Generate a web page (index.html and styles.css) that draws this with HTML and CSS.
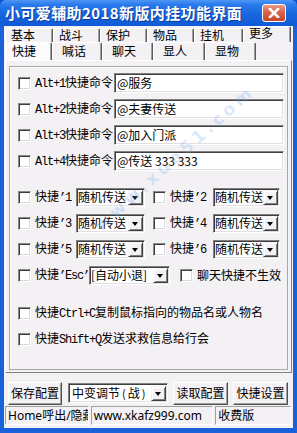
FILE: index.html
```html
<!DOCTYPE html>
<html lang="zh-CN">
<head>
    <meta charset="UTF-8">
    <title>小可爱辅助2018新版内挂功能界面</title>
    <link rel="stylesheet" href="styles.css">
</head>
<body>
<div class="window">
    <div class="titlebar">
        <span class="title">小可爱辅助2018新版内挂功能界面</span>
        <span class="close">
            <svg width="12" height="10" viewBox="0 0 12 10"><path d="M2 1 L10 9 M10 1 L2 9" stroke="#fff" stroke-width="2.6" stroke-linecap="square"/></svg>
        </span>
    </div>

    <div class="frame">
        <!-- two rows of tabs -->
        <div class="tabrow row1">
            <div class="tab w48">基本</div>
            <div class="tab w47">战斗</div>
            <div class="tab w47">保护</div>
            <div class="tab w47">物品</div>
            <div class="tab w49">挂机</div>
            <div class="tab w48 raised">更多</div>
        </div>
        <div class="tabrow row2">
            <div class="tab w47 active">快捷</div>
            <div class="tab w50">喊话</div>
            <div class="tab w51">聊天</div>
            <div class="tab w52">显人</div>
            <div class="tab w51">显物</div>
        </div>

        <div class="panel">
            <div class="group">
                <div class="row">
                    <span class="cb"></span>
                    <span class="lbl alt"><span class="m">Alt+1</span>快捷命令</span>
                    <span class="edit">@服务</span>
                </div>
                <div class="row">
                    <span class="cb"></span>
                    <span class="lbl alt"><span class="m">Alt+2</span>快捷命令</span>
                    <span class="edit">@夫妻传送</span>
                </div>
                <div class="row">
                    <span class="cb"></span>
                    <span class="lbl alt"><span class="m">Alt+3</span>快捷命令</span>
                    <span class="edit">@加入门派</span>
                </div>
                <div class="row">
                    <span class="cb"></span>
                    <span class="lbl alt"><span class="m">Alt+4</span>快捷命令</span>
                    <span class="edit">@传送 333 333</span>
                </div>

                <div class="row gap-top">
                    <span class="cb"></span>
                    <span class="lbl key">快捷<span class="m">’1</span></span>
                    <span class="combo c1"><span class="val">随机传送</span><span class="drop"></span></span>
                    <span class="cb second"></span>
                    <span class="lbl key2">快捷<span class="m">’2</span></span>
                    <span class="combo c2"><span class="val">随机传送</span><span class="drop"></span></span>
                </div>
                <div class="row">
                    <span class="cb"></span>
                    <span class="lbl key">快捷<span class="m">’3</span></span>
                    <span class="combo c1"><span class="val">随机传送</span><span class="drop"></span></span>
                    <span class="cb second"></span>
                    <span class="lbl key2">快捷<span class="m">’4</span></span>
                    <span class="combo c2"><span class="val">随机传送</span><span class="drop"></span></span>
                </div>
                <div class="row">
                    <span class="cb"></span>
                    <span class="lbl key">快捷<span class="m">’5</span></span>
                    <span class="combo c1"><span class="val">随机传送</span><span class="drop"></span></span>
                    <span class="cb second"></span>
                    <span class="lbl key2">快捷<span class="m">’6</span></span>
                    <span class="combo c2"><span class="val">随机传送</span><span class="drop"></span></span>
                </div>
                <div class="row">
                    <span class="cb"></span>
                    <span class="lbl esc">快捷<span class="m">’Esc’</span></span>
                    <span class="combo c3"><span class="val">[自动小退]</span><span class="drop"></span></span>
                    <span class="cb third"></span>
                    <span class="lbl">聊天快捷不生效</span>
                </div>

                <div class="row gap-top2">
                    <span class="cb"></span>
                    <span class="lbl">快捷<span class="m">Ctrl+C</span>复制鼠标指向的物品名或人物名</span>
                </div>
                <div class="row">
                    <span class="cb"></span>
                    <span class="lbl">快捷<span class="m">Shift+Q</span>发送求救信息给行会</span>
                </div>
            </div>
        </div>

        <div class="toolbar">
            <span class="btn b-save">保存配置</span>
            <span class="combo c4"><span class="val">中变调节<span class="paren">(</span>战<span class="paren">)</span></span><span class="drop"></span></span>
            <span class="btn b-load">读取配置</span>
            <span class="btn b-keys">快捷设置</span>
        </div>

        <div class="statusbar">
            <span class="pane p1">Home呼出/隐藏</span>
            <span class="pane p2">www.xkafz999.com</span>
            <span class="pane p3">收费版</span>
        </div>
    </div>

    <div class="watermark">www.xue51.com</div>
</div>
</body>
</html>
```

FILE: styles.css
```css
body {
    margin: 0;
    width: 297px;
    height: 433px;
    overflow: hidden;
    font-family: "Noto Sans CJK SC", sans-serif;
    font-size: 12px;
    color: #000;
    background: #0b53d0;
}

.window {
    position: relative;
    width: 297px;
    height: 433px;
}

/* title bar */
.titlebar {
    height: 26px;
    display: flex;
    align-items: center;
    background: linear-gradient(to bottom, #4d97f4 0%, #2a7aec 18%, #1766df 55%, #0f5ad6 100%);
    border-radius: 6px 6px 0 0;
}

.title {
    padding-left: 5px;
    color: #fff;
    font-weight: bold;
    font-size: 15px;
    letter-spacing: 0.4px;
    line-height: 26px;
    text-shadow: 1px 1px #0b3a9c;
}

.close {
    margin-left: auto;
    margin-right: 11px;
    width: 24px;
    height: 18px;
    box-sizing: border-box;
    border: 1px solid #fff;
    border-radius: 3px;
    background: linear-gradient(to bottom, #e89a86 0%, #d8664c 45%, #c8442a 100%);
    display: flex;
    align-items: center;
    justify-content: center;
}

/* client area */
.frame {
    height: 402px;
    border-left: 4px solid #1a62dc;
    border-right: 4px solid #1a62dc;
    border-bottom: 5px solid #1a62dc;
    background: #f4f1f5;
}

/* tabs */
.tabrow {
    display: flex;
    padding-left: 1px;
}

.row1 {
    height: 16px;
    align-items: flex-end;
}

.row2 {
    height: 18px;
}

.tab {
    box-sizing: border-box;
    border-top: 1px solid #fff;
    border-left: 1px solid #fff;
    border-right: 1px solid #5a5a5a;
    box-shadow: inset -1px 0 #a0a0a0;
    border-radius: 2px 2px 0 0;
    background: #f4f1f5;
    white-space: nowrap;
}

.row1 .tab {
    height: 14px;
    line-height: 12px;
    padding-left: 5px;
}

.row1 .tab.raised {
    height: 16px;
    line-height: 12px;
}

.row2 .tab {
    height: 18px;
    line-height: 16px;
    padding-left: 9px;
}

.row2 .tab.active {
    padding-left: 6px;
    background: #fcfbfd;
}

.w47 { width: 47px; }
.w48 { width: 48px; }
.w49 { width: 49px; }
.w50 { width: 50px; }
.w51 { width: 51px; }
.w52 { width: 52px; }

/* tab page */
.panel {
    margin-left: 1px;
    width: 287px;
    box-sizing: border-box;
    padding: 5px 3px 2px 3px;
    border: 1px solid;
    border-color: #fff #808080 #808080 #fff;
}

.group {
    padding: 3px 0 17px 8px;
    border: 1px solid #a8a8a8;
    box-shadow: inset 1px 1px #fff;
}

.row {
    display: flex;
    align-items: center;
    height: 26px;
    white-space: nowrap;
}

.gap-top {
    margin-top: 10px;
}

.gap-top2 {
    margin-top: 12px;
}

.cb {
    flex: none;
    width: 13px;
    height: 13px;
    box-sizing: border-box;
    background: #fff;
    border: 1px solid;
    border-color: #8a8a8a #fff #fff #8a8a8a;
    box-shadow: inset 1px 1px #3c3c3c, inset -1px -1px #dcd9dc;
    margin-right: 4px;
}

.cb.second {
    margin-left: 8px;
}

.cb.third {
    margin-left: 10px;
}

.lbl {
    flex: none;
    line-height: 14px;
}

.alt { width: 79px; }
.key { width: 41px; }
.key2 { width: 43px; }
.esc { width: 54px; }

.m {
    font-family: "Liberation Mono", monospace;
    font-size: 12px;
    letter-spacing: -1.2px;
}

/* edit box */
.edit {
    flex: none;
    width: 170px;
    height: 20px;
    box-sizing: border-box;
    padding-left: 2px;
    line-height: 18px;
    background: #fff;
    border: 1px solid;
    border-color: #808080 #fff #fff #808080;
    box-shadow: inset 1px 1px #404040, inset -1px -1px #e2dfe2;
}

/* combo box */
.combo {
    flex: none;
    display: flex;
    align-items: center;
    height: 19px;
    box-sizing: border-box;
    background: #fff;
    border: 1px solid;
    border-color: #808080 #fff #fff #808080;
    box-shadow: inset 1px 1px #404040, inset -1px -1px #e2dfe2;
    padding: 1px 1px 1px 1px;
}

.combo .val {
    flex: 1;
    line-height: 14px;
    white-space: nowrap;
}

.drop {
    flex: none;
    width: 15px;
    height: 15px;
    box-sizing: border-box;
    background: #f4f1f5;
    border: 1px solid;
    border-color: #f4f1f5 #404040 #404040 #f4f1f5;
    box-shadow: inset 1px 1px #fff, inset -1px -1px #808080;
    position: relative;
}

.drop::after {
    content: "";
    position: absolute;
    left: 3px;
    top: 5px;
    border-left: 3.5px solid transparent;
    border-right: 3.5px solid transparent;
    border-top: 4px solid #000;
}

.c1 { width: 69px; }
.c2 { width: 67px; }
.c3 { width: 81px; }
.c4 { width: 100px; height: 20px; padding-left: 3px; }

.paren {
    font-size: 11px;
    padding: 0 2px;
}

/* bottom buttons */
.toolbar {
    display: flex;
    align-items: center;
    height: 24px;
    margin-top: 8px;
    padding-left: 4px;
}

.btn {
    box-sizing: border-box;
    height: 23px;
    line-height: 20px;
    text-align: center;
    border: 1px solid;
    border-color: #fff #505050 #505050 #fff;
    box-shadow: inset -1px -1px #a0a0a0;
    background: #f4f1f5;
}

.b-save { width: 54px; margin-right: 6px; }
.b-load { width: 55px; margin-left: 5px; }
.b-keys { width: 55px; margin-left: 5px; }

/* status bar */
.statusbar {
    display: flex;
    margin-top: 1px;
    padding-left: 1px;
}

.pane {
    box-sizing: border-box;
    height: 19px;
    line-height: 17px;
    padding-left: 2px;
    font-family: "Noto Sans", "Noto Sans CJK SC", sans-serif;
    font-size: 12px;
    white-space: nowrap;
    overflow: hidden;
    border: 1px solid;
    border-color: #a0a0a0 #fff #fff #a0a0a0;
    margin-right: 2px;
}

.p1 { width: 84px; }
.p2 { width: 123px; }
.p3 { width: 76px; }

/* faint site watermark over the form */
.watermark {
    position: absolute;
    left: 70px;
    top: 148px;
    transform: rotate(-42deg);
    font-family: "DejaVu Sans", sans-serif;
    font-weight: bold;
    font-size: 17px;
    letter-spacing: 4px;
    color: rgba(110, 170, 235, 0.25);
    pointer-events: none;
}
```
